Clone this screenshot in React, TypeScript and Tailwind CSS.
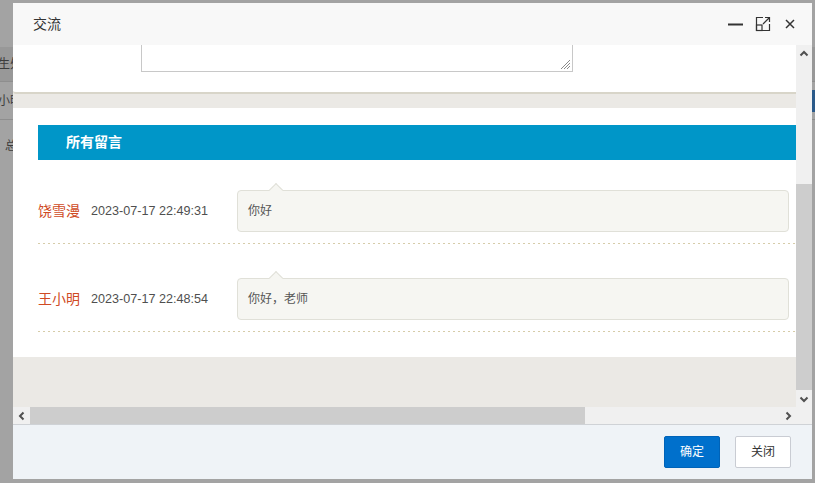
import React from 'react';

const cjk = "font-['Liberation_Sans','Noto_Sans_CJK_SC',sans-serif]";

type Msg = { name: string; time: string; text: string };

const messages: Msg[] = [
  { name: '饶雪漫', time: '2023-07-17 22:49:31', text: '你好' },
  { name: '王小明', time: '2023-07-17 22:48:54', text: '你好，老师' },
];

function Chevron({ dir }: { dir: 'up' | 'down' | 'left' | 'right' }) {
  const d = {
    up: 'M1.5 6.5L5 3l3.5 3.5',
    down: 'M1.5 3.5L5 7l3.5-3.5',
    left: 'M6.5 1.5L3 5l3.5 3.5',
    right: 'M3.5 1.5L7 5 3.5 8.5',
  }[dir];
  return (
    <svg width="10" height="10" viewBox="0 0 10 10" fill="none">
      <path d={d} stroke="#505050" strokeWidth="2" />
    </svg>
  );
}

function MessageRow({ msg, first }: { msg: Msg; first?: boolean }) {
  return (
    <div className={first ? 'pt-[30px]' : 'pt-[34px]'}>
      <div className="flex items-center">
        <span className="w-[53px] text-[14px] text-[#cf4a24]">{msg.name}</span>
        <span className="w-[146px] text-[12.6px] text-[#4f4f4f]">{msg.time}</span>
        <div className="relative w-[552px] h-[42px] flex items-center pl-[10px] bg-[#f6f6f2] border border-[#e0e0d8] rounded-[4px] text-[12px] text-[#555]">
          <div className="absolute left-[33px] -top-[6px] w-[10px] h-[10px] rotate-45 bg-[#f6f6f2] border-t border-l border-[#e0e0d8]" />
          {msg.text}
        </div>
      </div>
      <div className="mt-[11px] h-px bg-[repeating-linear-gradient(to_right,#d6cca9_0_2px,transparent_2px_5px)]" />
    </div>
  );
}

export default function App() {
  return (
    <div className={`relative w-[815px] h-[483px] overflow-hidden bg-[#a3a3a3] ${cjk}`}>
      {/* page behind the overlay */}
      <div className="flex flex-col text-[12px] text-[#3c3c3c]">
        <div className="h-[47px]" />
        <div className="h-[35px] flex items-center bg-[#989898] border-b border-[#8e8e8e]">
          <span className="-ml-[2px] whitespace-nowrap">生处</span>
        </div>
        <div className="h-[38px] flex items-center border-b border-[#8e8e8e]">
          <span className="-ml-[2px] whitespace-nowrap">小明</span>
          <div className="ml-auto w-[3px] h-[22px] bg-[#2b5a8a]" />
        </div>
        <div className="h-[52px] flex items-center">
          <span className="ml-[5px] whitespace-nowrap">总</span>
        </div>
      </div>

      {/* dialog */}
      <div className="absolute left-[13px] top-[3px] w-[799px] h-[476px] flex flex-col bg-white">
        {/* title bar */}
        <div className="h-[42px] shrink-0 flex items-center justify-between pl-[20px] pr-[15px] bg-[#f8f8f8]">
          <span className="text-[14px] text-[#333]">交流</span>
          <div className="flex items-center gap-[12px]">
            <svg width="16" height="16" viewBox="0 0 16 16">
              <path d="M1 8.5h15" stroke="#333" strokeWidth="2" />
            </svg>
            <svg width="16" height="16" viewBox="0 0 16 16" fill="none" stroke="#333" strokeWidth="1.2">
              <path d="M8 1.5H1.5v13h13V8" />
              <rect x="1.5" y="9" width="5.5" height="5.5" />
              <path d="M8 8L14.5 1.5M10 1.5h4.5V6" />
            </svg>
            <svg width="14" height="14" viewBox="0 0 14 14" fill="none" stroke="#333" strokeWidth="1.5">
              <path d="M3 3l8 8M11 3l-8 8" />
            </svg>
          </div>
        </div>

        {/* scrolling body */}
        <div className="grid grid-cols-[783px_16px] grid-rows-[362px_17px]">
          <div className="overflow-hidden flex flex-col bg-[#ebe9e5]">
            <div className="h-[49px] shrink-0 bg-white border-b-2 border-[#d8d5c9] rounded-bl-[3px]">
              <div className="relative ml-[128px] w-[432px] h-[27px] border-x border-b border-[#c8c8c8]">
                <svg className="absolute right-[1px] bottom-[1px]" width="12" height="12" viewBox="0 0 12 12" stroke="#8a8a8a" strokeWidth="1">
                  <path d="M11 2L2 11M11 5L5 11M11 8L8 11" />
                </svg>
              </div>
            </div>
            <div className="h-[14px] shrink-0" />
            <div className="h-[249px] shrink-0 bg-white pl-[25px] pt-[17px]">
              <div className="h-[35px] flex items-center pl-[28px] bg-[#0096c8] text-[14px] font-bold text-white">
                所有留言
              </div>
              {messages.map((m, i) => (
                <MessageRow key={m.name} msg={m} first={i === 0} />
              ))}
            </div>
          </div>

          {/* vertical scrollbar */}
          <div className="flex flex-col bg-[#f0f0f0]">
            <div className="h-[17px] flex items-center justify-center">
              <Chevron dir="up" />
            </div>
            <div className="flex-1 flex flex-col">
              <div className="h-[122px]" />
              <div className="h-[206px] bg-[#cdcdcd]" />
            </div>
            <div className="h-[17px] flex items-center justify-center">
              <Chevron dir="down" />
            </div>
          </div>

          {/* horizontal scrollbar */}
          <div className="flex bg-[#f0f0f0]">
            <div className="w-[17px] flex items-center justify-center">
              <Chevron dir="left" />
            </div>
            <div className="w-[555px] bg-[#cdcdcd]" />
            <div className="flex-1" />
            <div className="w-[17px] flex items-center justify-center">
              <Chevron dir="right" />
            </div>
          </div>
          <div className="bg-[#f0f0f0]" />
        </div>

        {/* footer */}
        <div className="flex-1 flex items-center justify-end gap-[15px] pr-[21px] bg-[#eff3f7] border-t border-[#cfd2d6]">
          <button className="w-[56px] h-[32px] rounded-[2px] bg-[#0070cc] border border-[#0063b8] text-[12px] text-white">
            确定
          </button>
          <button className="w-[56px] h-[32px] rounded-[2px] bg-white border border-[#c9ccd3] text-[12px] text-[#333]">
            关闭
          </button>
        </div>
      </div>
    </div>
  );
}
